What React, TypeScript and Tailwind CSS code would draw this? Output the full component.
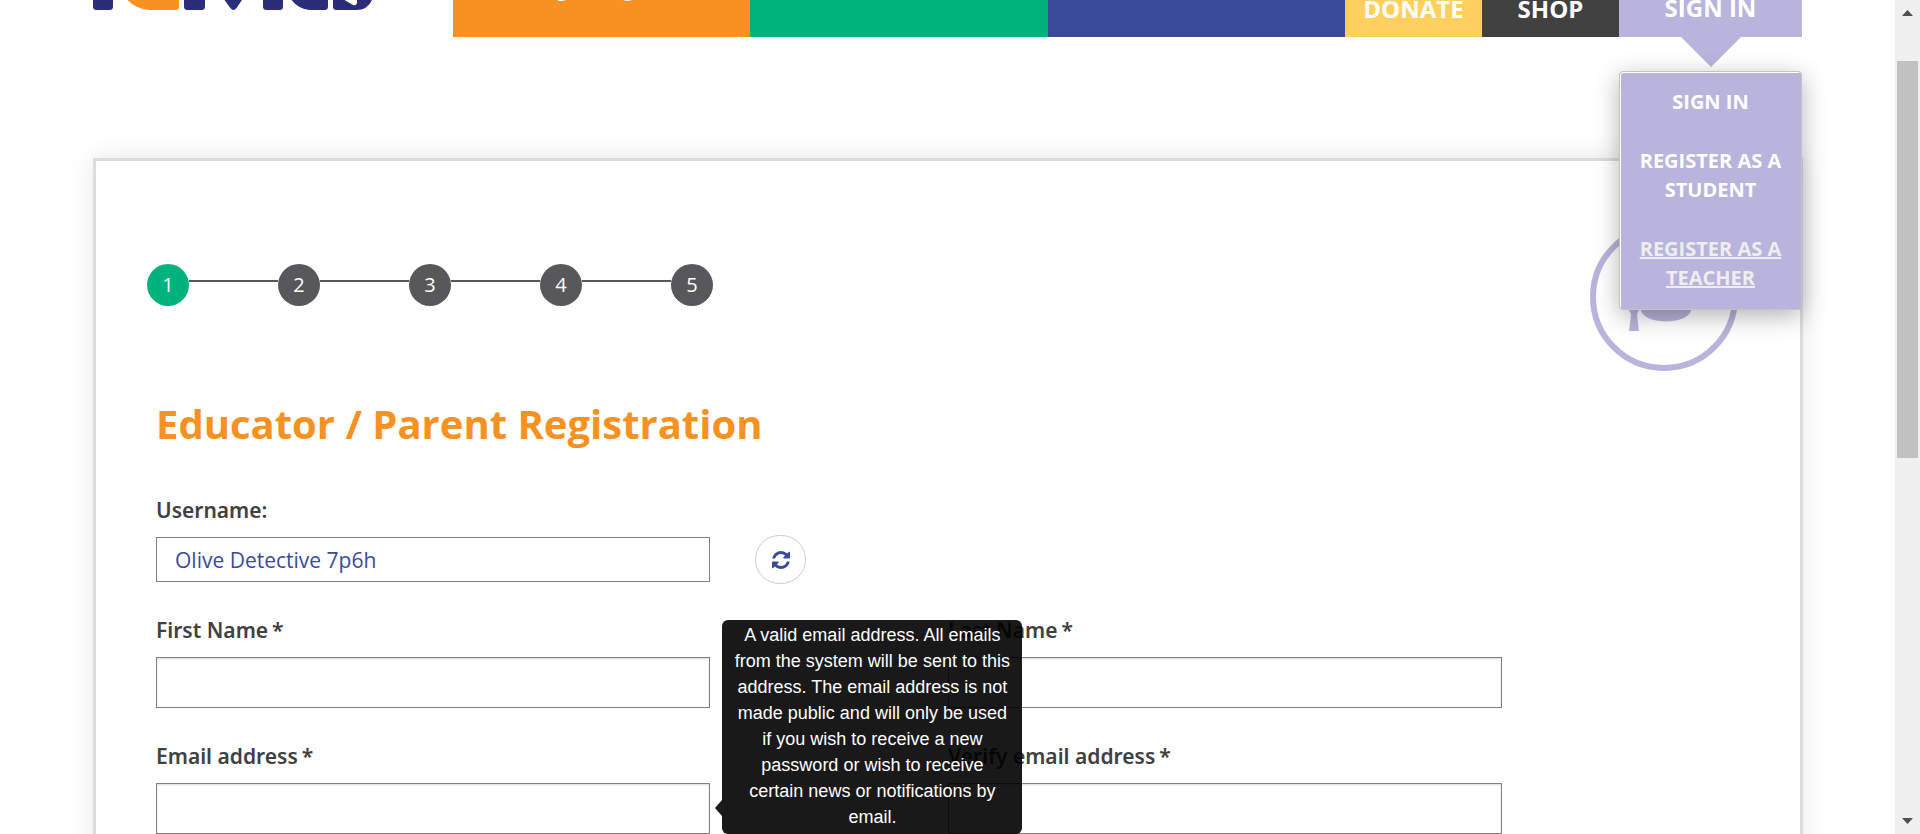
import type { ReactNode } from "react";

const steps = [1, 2, 3, 4, 5];

function Logo() {
  return (
    <svg viewBox="0 0 300 10" className="h-[10px] w-[300px]" role="img" aria-label="Home">
      <g fill="#2a2d78">
        <path d="M0 0h20v6.500q0 3.500-3.500 3.500h-13q-3.500 0-3.500-3.500z" />
        <path d="M91 0h21v6.500q0 3.500-3.500 3.500h-14q-3.500 0-3.500-3.500z" />
        <path d="M131.500 0h17.500l-5.500 8q-3 3.800-6.200 0z" />
        <path d="M170 0h20v6.500q0 3.500-3.500 3.500h-13q-3.500 0-3.500-3.500z" />
        <path d="M198.500 0h36.500v6.500q0 3.500-3.500 3.500h-15q-11-1-18-10z" />
        <path d="M240 0h39q-4.500 10-15.500 10h-20q-3.500 0-3.500-3.500z" />
      </g>
      <path d="M34.500 0h51.500v6.500q0 3.500-3.500 3.500h-26q-13.500-1-22-10z" fill="#f79122" />
      <path d="M251.500 0h12.500v3q-1 3-4 2z" fill="#fff" />
    </svg>
  );
}

function ScrollBar() {
  return (
    <div className="flex w-[25px] shrink-0 flex-col items-center bg-[#f0f0f0]" aria-hidden="true">
      <svg viewBox="0 0 11 6" className="mt-[10px] h-[6px] w-[11px]">
        <path d="M0 6L5.500 0L11 6z" fill="#505050" />
      </svg>
      <div className="mt-[45px] h-[397px] w-[21px] bg-[#c1c1c1]" />
      <svg viewBox="0 0 11 6" className="mt-auto mb-[10px] h-[6px] w-[11px]">
        <path d="M0 0L5.500 6L11 0z" fill="#505050" />
      </svg>
    </div>
  );
}

function Header() {
  return (
    <header className="relative z-20 mr-px flex h-[37px] font-['Open_Sans','Noto_Sans',sans-serif] font-bold text-white">
      <a href="#home" className="w-[360px] shrink-0">
        <Logo />
      </a>
      <nav className="flex flex-1 text-center text-[24px] leading-[18px]">
        <a href="#play" aria-label="Play" className="flex-1 bg-[#f79122]">
          <svg viewBox="0 0 76 2" className="ml-[104px] h-[2px] w-[76px]">
            <path d="M1 0h8q-3 1.500-8 1zM66 0h9q-4 2-9 0z" fill="#fff" />
          </svg>
        </a>
        <a href="#learn" aria-label="Learn" className="flex-1 bg-[#00b37d]" />
        <a href="#teach" aria-label="Teach" className="flex-1 bg-[#394b99]" />
        <a href="#donate" className="w-[137px] bg-[#ffd05f]">DONATE</a>
        <a href="#shop" className="w-[137px] bg-[#414141]">SHOP</a>
        <div className="relative w-[183px] bg-[#b9b4db]">
          <a href="#signin" className="block leading-[16px]">SIGN IN</a>
          <svg viewBox="0 0 60 30" className="absolute top-full left-[62px] h-[30px] w-[60px]">
            <path d="M0 0h60L30 30z" fill="#b9b4db" />
          </svg>
          <ul className="absolute top-[71px] left-0 flex w-full flex-col gap-[30px] rounded-[4px] border border-[#c4c4c4] bg-[#b9b4db] px-3 pt-[15px] pb-[17px] text-[20px] leading-[29px] shadow-[inset_1px_1px_0_#fff,0_6px_24px_rgba(0,0,0,0.3)]">
            <li><a href="#signin">SIGN IN</a></li>
            <li><a href="#student">REGISTER AS A STUDENT</a></li>
            <li><a href="#teacher" className="text-[#eeeeee] underline">REGISTER AS A TEACHER</a></li>
          </ul>
        </div>
      </nav>
    </header>
  );
}

function Steps() {
  return (
    <ol className="flex">
      {steps.map((n) => (
        <li key={n} className="flex">
          {n > 1 && <span className="mt-4 h-[2px] w-[89px] bg-[#58585a]" />}
          <span
            className={
              n === 1
                ? "size-[42px] rounded-full bg-[#00b37d] text-center text-[20px] leading-[42px] text-white"
                : "size-[42px] rounded-full bg-[#58585a] text-center text-[20px] leading-[42px] text-white"
            }
          >
            {n}
          </span>
        </li>
      ))}
    </ol>
  );
}

function GraduateBadge() {
  return (
    <svg viewBox="0 0 148 148" className="absolute top-[62px] right-[62px] size-[148px]" aria-hidden="true">
      <circle cx="74" cy="74" r="71" fill="none" stroke="#b9b4db" strokeWidth="6" />
      <g fill="#b9b4db">
        <path d="M74 36L114 58L74 80L34 58z" />
        <path d="M51 72L74 83L101 72V88C96 102 56 102 51 88z" />
        <path d="M42 62h3v22l4 3l-2 4l2 17h-10l2-17l-2-4l3-3z" />
      </g>
    </svg>
  );
}

function Tooltip({ children }: { children: ReactNode }) {
  return (
    <div
      role="tooltip"
      className="absolute bottom-0 left-full z-10 ml-3 w-[300px] rounded-[6px] bg-black/90 px-[11px] pt-[2px] pb-[4px] text-center font-['Liberation_Sans',Arial,sans-serif] text-[18px] leading-[26px] text-white"
    >
      {children}
      <svg viewBox="0 0 7 16" className="absolute right-full bottom-[18px] h-[16px] w-[7px]">
        <path d="M7 0L0 8L7 16z" fill="#000" fillOpacity="0.9" />
      </svg>
    </div>
  );
}

function Field({ id, label, type = "text", children }: { id: string; label: string; type?: string; children?: ReactNode }) {
  return (
    <div className="relative">
      <label htmlFor={id} className="block font-['Noto_Sans',sans-serif] text-[21px] leading-[28px] font-semibold">
        {label}
        <span className="ml-1">*</span>
      </label>
      <input
        id={id}
        type={type}
        className="mt-[13px] block h-[51px] w-full border border-[#808080] bg-white px-[18px] text-[21px] shadow-[inset_0_1px_2px_rgba(0,0,0,0.15)]"
      />
      {children}
    </div>
  );
}

export default function App() {
  return (
    <div className="flex h-screen overflow-hidden bg-white font-['Open_Sans','Noto_Sans',sans-serif] text-[#414042]">
      <div className="min-w-0 flex-1 overflow-hidden pr-[92px] pl-[93px]">
        <Header />
        <main className="relative mt-[121px] min-h-screen border-[3px] border-[#dcdcdc] bg-white px-[51px] pt-[103px] shadow-[0_0_24px_rgba(0,0,0,0.1)]">
          <GraduateBadge />
          <Steps />
          <form className="px-[9px]">
            <h1 className="mt-[92px] text-[40px] leading-[52px] font-bold text-[#f79122]">
              Educator / Parent Registration
            </h1>
            <label
              htmlFor="username"
              className="mt-[46px] block font-['Noto_Sans',sans-serif] text-[21px] leading-[28px] font-semibold"
            >
              Username:
            </label>
            <div className="mt-[11px] flex items-center gap-[45px]">
              <input
                id="username"
                defaultValue="Olive Detective 7p6h"
                className="h-[45px] w-[35%] border border-[#808080] bg-white px-[18px] text-[21px] text-[#394b99]"
              />
              <button
                type="button"
                aria-label="Generate a new username"
                className="flex h-[49px] w-[51px] items-center justify-center rounded-full border border-[#cccccc] bg-white"
              >
                <svg viewBox="0 0 1536 1536" className="size-[18px]" fill="#394b99">
                  <path d="M1511 928q0 5-1 7q-64 268-268 434.500T764 1536q-146 0-282.500-55T238 1324l-129 129q-19 19-45 19t-45-19t-19-45V960q0-26 19-45t45-19h448q26 0 45 19t19 45t-19 45l-137 137q71 66 161 102t187 36q134 0 250-65t186-179q11-17 53-117q8-23 30-23h192q13 0 22.500 9.500t9.500 22.500zm25-800v448q0 26-19 45t-45 19h-448q-26 0-45-19t-19-45t19-45l138-138q-148-137-349-137q-134 0-250 65T332 500q-11 17-53 117q-8 23-30 23H50q-13 0-22.500-9.500T18 608v-7q65-268 270-434.500T768 0q146 0 284 55.500T1297 212l130-129q19-19 45-19t45 19t19 45z" />
                </svg>
              </button>
            </div>
            <div className="mt-8 grid grid-cols-[35%_35%] gap-x-[15%] gap-y-[34px]">
              <Field id="first-name" label="First Name" />
              <Field id="last-name" label="Last Name" />
              <Field id="email" label="Email address" type="email">
                <Tooltip>
                  A valid email address. All emails from the system will be sent to this address. The email address is
                  not made public and will only be used if you wish to receive a new password or wish to receive certain
                  news or notifications by email.
                </Tooltip>
              </Field>
              <Field id="verify-email" label="Verify email address" type="email" />
            </div>
          </form>
        </main>
      </div>
      <ScrollBar />
    </div>
  );
}
